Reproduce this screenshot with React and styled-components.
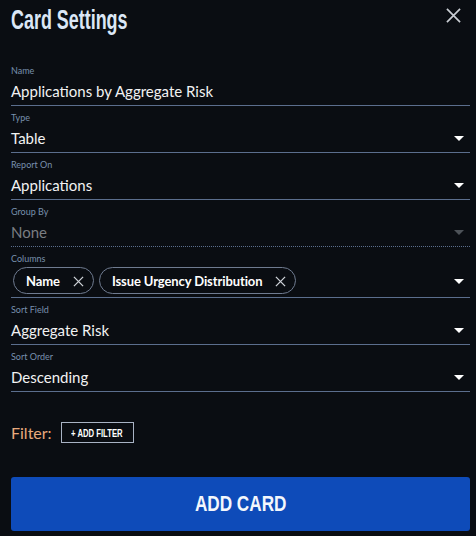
import React from "react";
import styled, { createGlobalStyle } from "styled-components";

const Global = createGlobalStyle`
  html, body {
    margin: 0;
    padding: 0;
    background: #0a0d12;
  }
  body {
    font-family: Lato, "Noto Sans", sans-serif;
  }
`;

// no condensed face is installed, so narrow Liberation Sans by scaling
const Angosta = styled.span`
  display: inline-block;
  font-family: "Liberation Sans", Arial, sans-serif;
  transform: scaleX(${(p) => p.$escala});
  transform-origin: ${(p) => p.$origen || "center"};
  white-space: nowrap;
`;

export default function App() {
  return (
    <Panel>
      <Global />
      <Header>
        <Titulo>
          <Angosta $escala={0.64} $origen="left">
            Card Settings
          </Angosta>
        </Titulo>
        <Cerrar aria-label="close">
          <svg width="15" height="15" viewBox="0 0 16 16">
            <path d="M1 1L15 15M15 1L1 15" stroke="#c9cdd3" strokeWidth="1.8" />
          </svg>
        </Cerrar>
      </Header>

      <Campos>
        <Campo>
          <Etiqueta>Name</Etiqueta>
          <Valor>Applications by Aggregate Risk</Valor>
        </Campo>
        <Campo>
          <Etiqueta>Type</Etiqueta>
          <Valor>
            Table
            <Flecha />
          </Valor>
        </Campo>
        <Campo>
          <Etiqueta>Report On</Etiqueta>
          <Valor>
            Applications
            <Flecha />
          </Valor>
        </Campo>
        <Campo $punteado>
          <Etiqueta>Group By</Etiqueta>
          <Valor $apagado>
            None
            <Flecha $apagado />
          </Valor>
        </Campo>
        <Campo>
          <Etiqueta>Columns</Etiqueta>
          <ValorChips>
            <Chips>
              <Chip>
                Name
                <ChipX />
              </Chip>
              <Chip>
                Issue Urgency Distribution
                <ChipX />
              </Chip>
            </Chips>
            <Flecha />
          </ValorChips>
        </Campo>
        <Campo>
          <Etiqueta>Sort Field</Etiqueta>
          <Valor>
            Aggregate Risk
            <Flecha />
          </Valor>
        </Campo>
        <Campo>
          <Etiqueta>Sort Order</Etiqueta>
          <Valor>
            Descending
            <Flecha />
          </Valor>
        </Campo>
      </Campos>

      <FiltroFila>
        <FiltroTexto>Filter:</FiltroTexto>
        <BtnFiltro>
          <Angosta $escala={0.7}>+ ADD FILTER</Angosta>
        </BtnFiltro>
      </FiltroFila>

      <BtnAgregar>
        <Angosta $escala={0.78}>ADD CARD</Angosta>
      </BtnAgregar>
    </Panel>
  );
}

function Flecha({ $apagado }) {
  return (
    <IconoFlecha viewBox="0 0 24 24" width="24" height="24">
      <path d="M7 10l5 5 5-5z" fill={$apagado ? "#4d5258" : "#ffffff"} />
    </IconoFlecha>
  );
}

function ChipX() {
  return (
    <IconoChipX viewBox="0 0 12 12" width="11" height="11">
      <path d="M1 1L11 11M11 1L1 11" stroke="#d0d4da" strokeWidth="1.4" />
    </IconoChipX>
  );
}

const Panel = styled.div`
  width: 476px;
  height: 536px;
  box-sizing: border-box;
  padding: 0 6px 0 11px;
  background: #0a0d12;
  display: flex;
  flex-direction: column;
`;

const Header = styled.div`
  display: flex;
  align-items: flex-start;
  justify-content: space-between;
  height: 34px;
`;

const Titulo = styled.h1`
  margin: 0;
  padding-top: 1px;
  font-weight: 700;
  font-size: 28px;
  line-height: 34px;
  color: #dbe7f6;
`;

const Cerrar = styled.button`
  background: none;
  border: none;
  padding: 0;
  margin: 8px 9px 0 0;
  width: 15px;
  height: 15px;
  display: flex;
  cursor: pointer;
`;

const Campos = styled.div`
  display: flex;
  flex-direction: column;
  margin-top: 25px;
`;

const Campo = styled.div`
  display: flex;
  flex-direction: column;
  padding-top: 6px;
  border-bottom: 1px ${(p) => (p.$punteado ? "dotted" : "solid")} #5b6e8d;
`;

const Etiqueta = styled.label`
  font-size: 9px;
  line-height: 12px;
  color: #7890ad;
`;

const Valor = styled.div`
  height: 28px;
  display: flex;
  align-items: center;
  justify-content: space-between;
  font-size: 15px;
  color: ${(p) => (p.$apagado ? "#7a7d82" : "#f2f2f2")};
`;

const ValorChips = styled(Valor)`
  height: 32px;
  align-items: flex-start;
  padding-top: 2px;
  box-sizing: border-box;
  svg:last-child {
    margin-top: 2px;
  }
`;

const Chips = styled.div`
  display: flex;
  gap: 5px;
  padding-left: 2px;
`;

const Chip = styled.span`
  display: inline-flex;
  align-items: center;
  gap: 13px;
  height: 27px;
  box-sizing: border-box;
  padding: 0 9px 0 12px;
  border: 1px solid #6f7b90;
  border-radius: 14px;
  font-size: 13px;
  font-weight: 700;
  letter-spacing: -0.1px;
  color: #ffffff;
`;

const IconoChipX = styled.svg`
  display: block;
`;

const IconoFlecha = styled.svg`
  display: block;
  flex-shrink: 0;
  margin-right: -1px;
`;

const FiltroFila = styled.div`
  display: flex;
  align-items: center;
  gap: 9px;
  margin-top: 30px;
`;

const FiltroTexto = styled.span`
  font-size: 16px;
  color: #e8aa7c;
`;

const BtnFiltro = styled.button`
  height: 21px;
  width: 73px;
  padding: 0;
  display: flex;
  align-items: center;
  justify-content: center;
  background: transparent;
  border: 1px solid #a9b3c4;
  color: #ffffff;
  font-weight: 700;
  font-size: 11px;
  cursor: pointer;
`;

const BtnAgregar = styled.button`
  margin-top: 34px;
  height: 54px;
  width: 459px;
  display: flex;
  align-items: center;
  justify-content: center;
  border: none;
  border-radius: 3px;
  background: #0e4bb9;
  color: #f4f7fc;
  font-size: 22px;
  font-weight: 700;
  cursor: pointer;
`;
